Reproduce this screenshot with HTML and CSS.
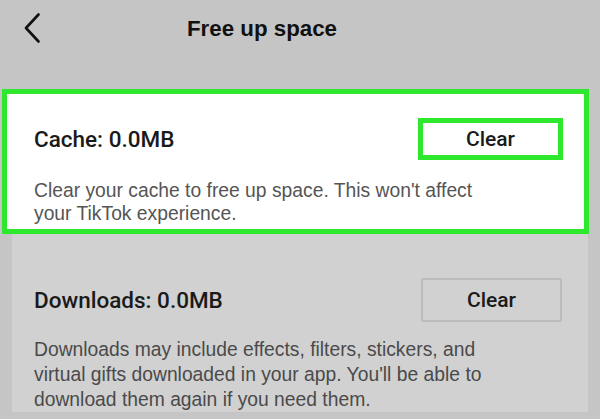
FILE: index.html
```html
<!DOCTYPE html>
<html>
<head>
<meta charset="utf-8">
<link rel="stylesheet" href="styles.css">
</head>
<body>
<div class="page">
  <header class="topbar">
    <svg class="back" width="18" height="30" viewBox="0 0 18 30"><path d="M15.5 1.5 L3 15 L15.5 28.5" fill="none" stroke="#111" stroke-width="2.6" stroke-linecap="round" stroke-linejoin="round"/></svg>
    <h1 class="title">Free up space</h1>
  </header>
  <section class="cache">
    <div class="row">
      <span class="label">Cache: 0.0MB</span>
      <span class="btn btn-hl">Clear</span>
    </div>
    <p class="desc desc-white">Clear your cache to free up space. This won't affect your TikTok experience.</p>
  </section>
  <section class="downloads">
    <div class="row">
      <span class="label">Downloads: 0.0MB</span>
      <span class="btn btn-plain">Clear</span>
    </div>
    <p class="desc">Downloads may include effects, filters, stickers, and virtual gifts downloaded in your app. You'll be able to download them again if you need them.</p>
  </section>
</div>
</body>
</html>
```

FILE: styles.css
```css
* { box-sizing: border-box; }
html, body { margin: 0; padding: 0; }
body {
  width: 600px;
  height: 419px;
  overflow: hidden;
  background: #c5c5c5;
  font-family: "Liberation Sans", Arial, sans-serif;
  color: #111;
}
.page { display: flex; flex-direction: column; }
.topbar {
  height: 89px;
  display: flex;
  align-items: flex-start;
  padding: 13px 0 0 23px;
}
.back { display: block; }
.title {
  margin: 3px 0 0 146px;
  font-size: 22.3px;
  font-weight: 700;
  line-height: 26px;
  color: #111;
}
.cache {
  margin: 0 11px 0 2px;
  border: 5px solid #2ee82e;
  background: #fff;
  padding: 24px 21px 5px 27px;
  height: 145px;
}
.downloads {
  margin: 0 12px;
  background: #d1d1d1;
  padding: 44px 26px 0 22px;
  flex: 1;
  height: 200px;
}
.row {
  display: flex;
  align-items: center;
  justify-content: space-between;
}
.label {
  font-family: Roboto, "Liberation Sans", sans-serif;
  font-size: 22.5px;
  font-weight: 500;
  color: #1a1a1a;
}
.btn {
  display: flex;
  align-items: center;
  justify-content: center;
  font-family: Roboto, "Liberation Sans", sans-serif;
  font-size: 21px;
  font-weight: 500;
  color: #1a1a1a;
}
.btn-hl {
  width: 145px;
  height: 42px;
  border: 5px solid #2ee82e;
  background: #fff;
}
.btn-plain {
  width: 141px;
  height: 44px;
  border: 2px solid #bcbcbc;
  border-radius: 2px;
}
.desc {
  margin: 19px 0 0;
  width: 464px;
  font-size: 19.3px;
  line-height: 23px;
  color: #4a4a4a;
}
.desc-white { color: #555; }
.downloads .desc { margin-top: 15px; line-height: 25px; }
```
